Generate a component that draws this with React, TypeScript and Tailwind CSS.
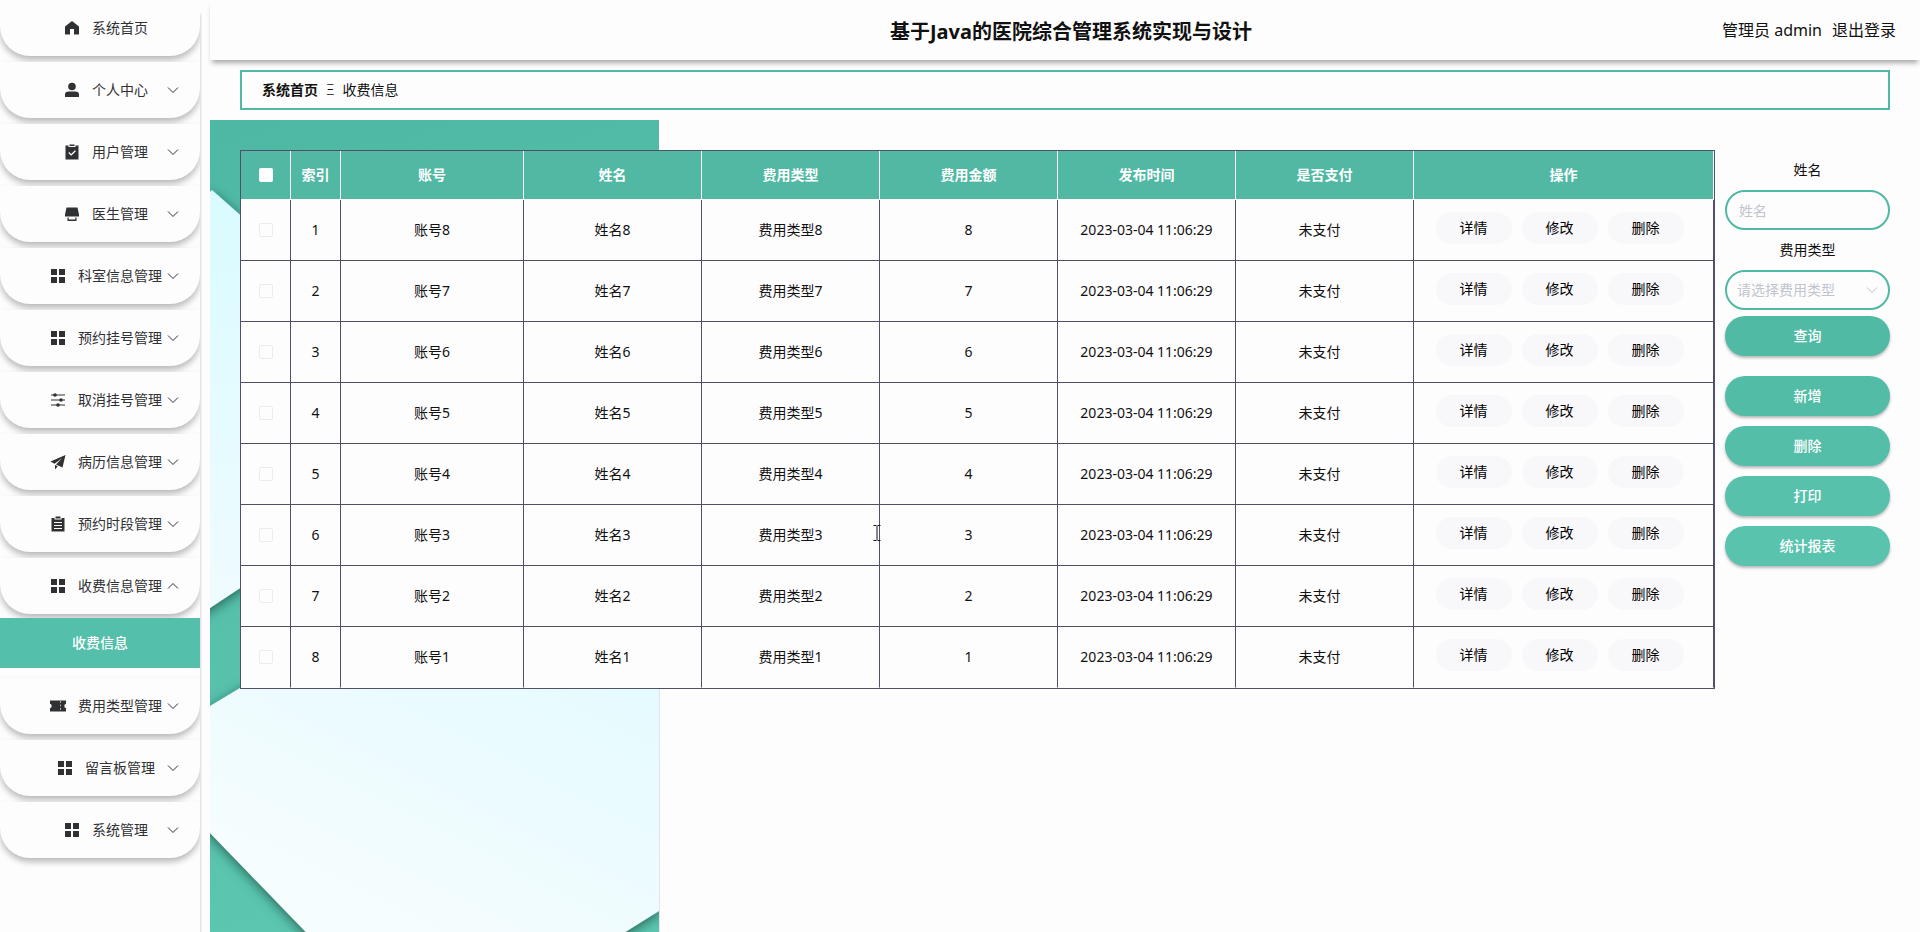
import type { ComponentType } from 'react';

type IconProps = { className?: string };

function HomeIcon({ className }: IconProps) {
  return (
    <svg viewBox="0 0 16 16" className={className} fill="currentColor" aria-hidden="true">
      <path d="M8 1 15 6.500V14.500H10V9H6V14.500H1V6.500Z" />
    </svg>
  );
}

function UserIcon({ className }: IconProps) {
  return (
    <svg viewBox="0 0 16 16" className={className} fill="currentColor" aria-hidden="true">
      <circle cx="8" cy="4.500" r="3.800" />
      <path d="M1 15v-2.500C1 10.500 2.500 9.600 4.500 9.600h7c2 0 3.500.9 3.500 2.900V15Z" />
    </svg>
  );
}

function ClaimIcon({ className }: IconProps) {
  return (
    <svg viewBox="0 0 16 16" className={className} aria-hidden="true">
      <path fill="currentColor" d="M1.500 1.500h3V3h7V1.500h3v14h-13Z" />
      <path fill="currentColor" d="M5.500.5h5V2h-5Z" />
      <path d="m4.800 8.500 2.400 2.400 4.200-4.200" fill="none" stroke="#fff" strokeWidth="1.300" />
    </svg>
  );
}

function ShopIcon({ className }: IconProps) {
  return (
    <svg viewBox="0 0 16 16" className={className} fill="currentColor" aria-hidden="true">
      <path d="M2.500 1.500h11L15 8.500V10.500H1V8.500Z" />
      <path d="M3.500 11.500h1.200v2h6.600v-2h1.200V15h-9Z" />
    </svg>
  );
}

function GridIcon({ className }: IconProps) {
  return (
    <svg viewBox="0 0 16 16" className={className} fill="currentColor" aria-hidden="true">
      <path d="M1 1h6v6H1ZM9 1h6v6H9ZM1 9h6v6H1ZM9 9h6v6H9Z" />
    </svg>
  );
}

function OperationIcon({ className }: IconProps) {
  return (
    <svg viewBox="0 0 16 16" className={className} fill="currentColor" aria-hidden="true">
      <path d="M1 2.400h14v1.200H1ZM1 7.400h14v1.200H1ZM1 12.400h14v1.200H1Z" />
      <circle cx="5" cy="3" r="1.800" />
      <circle cx="11" cy="8" r="1.800" />
      <circle cx="8" cy="13" r="1.800" />
    </svg>
  );
}

function PromotionIcon({ className }: IconProps) {
  return (
    <svg viewBox="0 0 16 16" className={className} fill="currentColor" aria-hidden="true">
      <path d="M15.500 1 .5 7.500 4.500 9.800 12 4.200 6 10.500 12.500 13.500Z" />
      <path d="M5 11v4.500l2.800-3.200Z" />
    </svg>
  );
}

function OrderIcon({ className }: IconProps) {
  return (
    <svg viewBox="0 0 16 16" className={className} aria-hidden="true">
      <path fill="currentColor" d="M1.500 2h3v1.500h7V2h3v13.500h-13Z" />
      <path fill="currentColor" d="M5.500.5h5v2h-5Z" />
      <path d="M4 6.500h8M4 9.500h8M4 12.500h8" stroke="#fff" strokeWidth="1" />
    </svg>
  );
}

function TicketIcon({ className }: IconProps) {
  return (
    <svg viewBox="0 0 16 16" className={className} aria-hidden="true">
      <path fill="currentColor" d="M0 2.500h16v3.200a2.400 2.400 0 0 0 0 4.600v3.200H0v-3.200a2.400 2.400 0 0 0 0-4.600Z" />
      <path d="M10.500 3v10" stroke="#aaa" strokeWidth="1" strokeDasharray="2 1.500" />
    </svg>
  );
}

function Arrow({ className }: IconProps) {
  return (
    <svg viewBox="0 0 12 12" className={className} fill="none" stroke="currentColor" aria-hidden="true">
      <path d="m1 3.500 5 5 5-5" />
    </svg>
  );
}

function TextCursor({ className }: IconProps) {
  return (
    <svg viewBox="0 0 8 16" className={className} fill="none" stroke="#111" aria-hidden="true">
      <path d="M.5.5h3M4.500.5h3M4 1v14M.5 15.500h3M4.500 15.500h3" />
    </svg>
  );
}

interface MenuItem {
  label: string;
  icon: ComponentType<IconProps>;
  leaf?: boolean;
  children?: string[];
}

const menu: MenuItem[] = [
  { label: '系统首页', icon: HomeIcon, leaf: true },
  { label: '个人中心', icon: UserIcon },
  { label: '用户管理', icon: ClaimIcon },
  { label: '医生管理', icon: ShopIcon },
  { label: '科室信息管理', icon: GridIcon },
  { label: '预约挂号管理', icon: GridIcon },
  { label: '取消挂号管理', icon: OperationIcon },
  { label: '病历信息管理', icon: PromotionIcon },
  { label: '预约时段管理', icon: OrderIcon },
  { label: '收费信息管理', icon: GridIcon, children: ['收费信息'] },
  { label: '费用类型管理', icon: TicketIcon },
  { label: '留言板管理', icon: GridIcon },
  { label: '系统管理', icon: GridIcon },
];

const columns = ['索引', '账号', '姓名', '费用类型', '费用金额', '发布时间', '是否支付', '操作'];

const records = [8, 7, 6, 5, 4, 3, 2, 1].map((n) => ({
  account: `账号${n}`,
  name: `姓名${n}`,
  feeType: `费用类型${n}`,
  amount: n,
  time: '2023-03-04 11:06:29',
  paid: '未支付',
}));

export default function App() {
  return (
    <div className="flex min-h-screen bg-[#fefdfe] font-['Noto_Sans','Noto_Sans_CJK_SC',sans-serif] text-sm text-[#111]">
      <Sidebar />
      <div className="flex min-w-0 flex-1 flex-col pl-2.5">
        <Header />
        <Breadcrumb />
        <main className="relative mt-2.5 flex flex-1 items-start gap-2.5 p-[30px]">
          <Backdrop />
          <FeeTable />
          <FilterPanel />
        </main>
      </div>
    </div>
  );
}

function Sidebar() {
  return (
    <aside className="w-[200px] shrink-0 overflow-hidden shadow-[1px_14px_2px_#d8d8da]">
      <nav>
        <ul>
          {menu.map((item) => (
            <li key={item.label} className="relative bg-[#fefdfe] pb-1.5">
              <MenuButton item={item} />
              {item.children?.map((child) => (
                <a
                  key={child}
                  href="#"
                  className="relative mt-1 mb-1 flex h-[50px] items-center justify-center bg-[#54bfaa] font-medium text-white"
                >
                  {child}
                </a>
              ))}
            </li>
          ))}
        </ul>
      </nav>
    </aside>
  );
}

function MenuButton({ item }: { item: MenuItem }) {
  const Icon = item.icon;

  return (
    <button className="relative flex h-14 w-full items-center justify-center rounded-b-[30px] pl-3 text-[#303133] shadow-[0_4px_6px_#b9b9bb]">
      <Icon className="mr-3 size-4" />
      <span>{item.label}</span>
      {!item.leaf && (
        <Arrow className={`absolute right-[21px] size-3 ${item.children ? 'rotate-180' : ''}`} />
      )}
    </button>
  );
}

function Header() {
  return (
    <header className="grid h-[60px] grid-cols-[1fr_auto_1fr] items-center shadow-[0_5px_5px_-2px_#a8a8aa]">
      <h1 className="col-start-2 pt-1 pl-3 text-xl font-bold">基于Java的医院综合管理系统实现与设计</h1>
      <div className="flex gap-2.5 justify-self-end pr-6 text-base">
        <span>管理员 admin</span>
        <a href="#">退出登录</a>
      </div>
    </header>
  );
}

function Breadcrumb() {
  return (
    <nav className="mx-[30px] mt-2.5 flex h-10 items-center gap-2 border-2 border-[#50b8a3] px-5">
      <a href="#" className="font-bold">
        系统首页
      </a>
      <span className="font-light">Ξ</span>
      <span>收费信息</span>
    </nav>
  );
}

/* paper-cut artwork behind the table */
function Backdrop() {
  return (
    <svg className="absolute top-0 left-0 h-full w-[450px]" viewBox="0 0 450 812" preserveAspectRatio="xMinYMin slice" aria-hidden="true">
      <defs>
        <linearGradient id="green" x1="0" y1="0" x2="0.200" y2="1">
          <stop offset="0" stopColor="#4fb8a4" />
          <stop offset="1" stopColor="#5cc6b0" />
        </linearGradient>
        <linearGradient id="ice" x1="0" y1="0" x2="0" y2="1">
          <stop offset="0" stopColor="#d9fbff" />
          <stop offset="1" stopColor="#f0fbff" />
        </linearGradient>
        <linearGradient id="paper" gradientUnits="userSpaceOnUse" x1="450" y1="530" x2="290" y2="850">
          <stop offset="0" stopColor="#e4fbff" />
          <stop offset="0.500" stopColor="#ebfbff" />
          <stop offset="1" stopColor="#f5fdfe" />
        </linearGradient>
        <filter id="fold" x="-20%" y="-20%" width="140%" height="140%">
          <feDropShadow dx="0" dy="3" stdDeviation="6" floodColor="#134e42" floodOpacity="0.800" />
        </filter>
      </defs>
      <rect width="449" height="812" fill="url(#green)" />
      <path d="M-20 90 2 70 200 245V356L0 488-20 501Z" fill="url(#ice)" filter="url(#fold)" />
      <path d="M-20 598 0 586 110 520H449V791L380 834H117L0 713-20 692Z" fill="url(#paper)" filter="url(#fold)" />
      <path d="M449.500 0V120" stroke="#fefdfe" />
      <path d="M449.500 400V812" stroke="#e4e4e8" />
    </svg>
  );
}

function FeeTable() {
  return (
    <div className="relative min-w-0 flex-1 border border-[#50506a] bg-[#fefdfe]">
      <table className="w-full table-fixed border-separate border-spacing-0 text-center">
        <colgroup>
          <col className="w-[50px]" />
          <col className="w-[50px]" />
          <col className="w-[183px]" />
          <col span={5} className="w-[178px]" />
          <col />
        </colgroup>
        <thead>
          <tr className="h-[49px] bg-[#50b8a3] text-white">
            <th className="border-r border-b border-white">
              <input type="checkbox" aria-label="全选" className="mx-auto block size-3.5 appearance-none rounded-xs bg-white" />
            </th>
            {columns.map((column) => (
              <th key={column} className="border-r border-b border-white font-bold">
                {column}
              </th>
            ))}
          </tr>
        </thead>
        <tbody>
          {records.map((record, index) => (
            <tr
              key={record.account}
              className="h-[61px] [&>td]:border-r [&>td]:border-b [&>td]:border-[#50506a] last:[&>td]:border-b-[#fefdfe]"
            >
              <td>
                <input
                  type="checkbox"
                  aria-label={`选择${record.account}`}
                  className="mx-auto block size-3.5 appearance-none rounded-xs border border-[#ececf0]"
                />
              </td>
              <td>{index + 1}</td>
              <td>{record.account}</td>
              <td>{record.name}</td>
              <td className="relative">
                {record.feeType}
                {index === 5 && <TextCursor className="pointer-events-none absolute top-5 -right-0.5 h-4 w-2" />}
              </td>
              <td>{record.amount}</td>
              <td>{record.time}</td>
              <td className="pr-2.5">{record.paid}</td>
              <td>
                <div className="flex justify-center gap-2.5 pr-2 pb-1">
                  {['详情', '修改', '删除'].map((action) => (
                    <button key={action} className="h-8 w-19 rounded-full bg-[#f8f7f9] text-black">
                      {action}
                    </button>
                  ))}
                </div>
              </td>
            </tr>
          ))}
        </tbody>
      </table>
    </div>
  );
}

const actionStyle = 'h-10 w-full rounded-full font-medium text-white shadow-[0_2px_3px_#b4b8b8]';

function FilterPanel() {
  return (
    <form className="relative flex w-[165px] shrink-0 flex-col" onSubmit={(event) => event.preventDefault()}>
      <label htmlFor="name" className="flex h-10 items-center justify-center">
        姓名
      </label>
      <input
        id="name"
        placeholder="姓名"
        className="h-10 w-full rounded-full border-2 border-[#50b8a3] px-3 placeholder:text-[#c0c4cc]"
      />
      <label htmlFor="fee-type" className="flex h-10 items-center justify-center">
        费用类型
      </label>
      <div className="relative">
        <select
          id="fee-type"
          className="h-10 w-full appearance-none rounded-full border-2 border-[#50b8a3] px-2.5 text-[#c0c4cc]"
        >
          <option>请选择费用类型</option>
        </select>
        <Arrow className="pointer-events-none absolute top-3.5 right-3 size-3 text-[#c0c4cc]" />
      </div>
      <button type="submit" className={`${actionStyle} mt-1.5 bg-[#51baa5]`}>
        查询
      </button>
      <div className="mt-5 flex flex-col gap-2.5">
        <button type="button" className={`${actionStyle} bg-[#53bca7]`}>
          新增
        </button>
        <button type="button" className={`${actionStyle} bg-[#55bea9]`}>
          删除
        </button>
        <button type="button" className={`${actionStyle} bg-[#58c1ac]`}>
          打印
        </button>
        <button type="button" className={`${actionStyle} bg-[#5ac3ae]`}>
          统计报表
        </button>
      </div>
    </form>
  );
}
